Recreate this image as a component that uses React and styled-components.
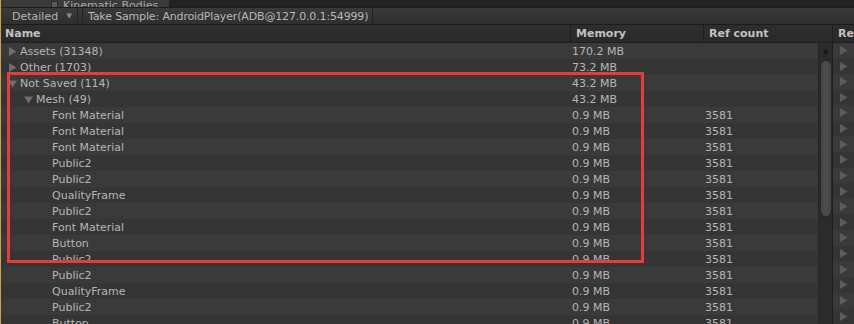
import React from 'react'
import styled, { createGlobalStyle } from 'styled-components'

const GlobalStyle = createGlobalStyle`
  html, body {
    margin: 0;
    padding: 0;
    background: #383838;
    overflow: hidden;
  }
  * { box-sizing: border-box; }
`

const Frame = styled.div`
  width: 854px;
  height: 324px;
  overflow: hidden;
  border-left: 1px solid #c9a44a;
  background: #383838;
  font-family: "DejaVu Sans", sans-serif;
  font-size: 11px;
  color: #b6b6b6;
  display: flex;
  flex-direction: column;
`

const TopStrip = styled.div`
  height: 7px;
  display: flex;
  background: #232323;
  overflow: hidden;
`
const StripLeft = styled.div`
  width: 168px;
  height: 7px;
  background: #3a3a3a;
  display: flex;
  align-items: flex-end;
  padding-left: 50px;
  gap: 5px;
  line-height: 12px;
  color: #a8a8a8;
  white-space: nowrap;
  overflow: hidden;
`
const CheckBox = styled.span`
  flex: none;
  width: 7px;
  height: 6px;
  background: #5a5a5a;
  border: 1px solid #2a2a2a;
  border-bottom: none;
`
const StripText = styled.span`
  margin-bottom: -5px;
`

const Toolbar = styled.div`
  height: 18px;
  display: flex;
  align-items: stretch;
  background: linear-gradient(#3a3a3a, #2f2f2f);
  border-top: 1px solid #1e1e1e;
  border-bottom: 1px solid #1c1c1c;
  white-space: nowrap;
`
const Dropdown = styled.div`
  width: 77px;
  display: flex;
  align-items: center;
  justify-content: space-between;
  padding: 0 5px 0 11px;
  border-right: 1px solid #222;
  color: #b4b4b4;
`
const Caret = styled.span`
  font-size: 7px;
  color: #8a8a8a;
`
const ToolButton = styled.div`
  margin-left: 4px;
  display: flex;
  align-items: center;
  padding: 0 4px 0 5px;
  border-left: 1px solid #222;
  border-right: 1px solid #222;
  color: #b8b8b8;
  letter-spacing: -0.15px;
`

const Body = styled.div`
  flex: 1;
  display: flex;
  min-height: 0;
`
const TreePanel = styled.div`
  width: 835px;
  display: flex;
  flex-direction: column;
  position: relative;
`
const HeaderRow = styled.div`
  height: 18px;
  display: grid;
  grid-template-columns: 570px 133px 1fr;
  background: linear-gradient(#2e2e2e, #292929);
  border-bottom: 1px solid #1f1f1f;
  font-weight: bold;
  color: #c2c2c2;
`
const HeaderCell = styled.div`
  display: flex;
  align-items: center;
  padding-left: ${p => p.$pad}px;
  border-right: ${p => (p.$last ? 'none' : '1px solid #1e1e1e')};
`
const ListArea = styled.div`
  flex: 1;
  display: flex;
  min-height: 0;
`
const Rows = styled.div`
  flex: 1;
  overflow: hidden;
`
const Row = styled.div`
  height: 16px;
  display: grid;
  grid-template-columns: 570px 133px 1fr;
  align-items: center;
  background: ${p => (p.$odd ? '#353535' : '#3a3a3a')};
`
const NameCell = styled.div`
  display: flex;
  align-items: center;
  padding-left: ${p => 7 + p.$level * 16}px;
  white-space: nowrap;
`
const ArrowBox = styled.span`
  width: 12px;
  height: 16px;
  display: flex;
  align-items: center;
  flex: none;
`
const Cell = styled.div`
  padding-left: ${p => p.$pad}px;
  white-space: nowrap;
`

const Scrollbar = styled.div`
  width: 14px;
  background: #2b2b2b;
  border-left: 1px solid #262626;
  display: flex;
  flex-direction: column;
  align-items: center;
  padding-top: 3px;
`
const ScrollArrow = styled.div`
  font-size: 7px;
  color: #151515;
  height: 10px;
  line-height: 10px;
`
const Thumb = styled.div`
  margin-top: 4px;
  width: 12px;
  height: 157px;
  border-radius: 6px;
  background: linear-gradient(90deg, #454545, #4e4e4e 50%, #444);
  border: 1px solid #262626;
`

const Highlight = styled.div`
  position: absolute;
  left: 6px;
  top: 47px;
  width: 637px;
  height: 191px;
  border: 3px solid #e53d3b;
  pointer-events: none;
`

const SidePanel = styled.div`
  flex: 1;
  display: flex;
  flex-direction: column;
  border-left: 1px solid #1e1e1e;
`
const SideHeader = styled.div`
  height: 18px;
  display: flex;
  align-items: center;
  padding-left: 5px;
  font-weight: bold;
  color: #c2c2c2;
  background: linear-gradient(#2e2e2e, #292929);
  border-bottom: 1px solid #1f1f1f;
`
const SideRow = styled.div`
  height: 16px;
  display: flex;
  align-items: center;
  padding-left: 6px;
  background: ${p => (p.$odd ? '#353535' : '#3a3a3a')};
`

const Triangle = ({ open, color = '#6e6e6e' }) => (
  <svg width="9" height="9" viewBox="0 0 9 9">
    {open ? <path d="M0 1.5 L9 1.5 L4.5 8.5 Z" fill={color} /> : <path d="M1 0 L8.5 4.5 L1 9 Z" fill={color} />}
  </svg>
)

const rows = [
  { name: 'Assets (31348)', mem: '170.2 MB', ref: '', level: 0, arrow: 'closed' },
  { name: 'Other (1703)', mem: '73.2 MB', ref: '', level: 0, arrow: 'closed' },
  { name: 'Not Saved (114)', mem: '43.2 MB', ref: '', level: 0, arrow: 'open' },
  { name: 'Mesh (49)', mem: '43.2 MB', ref: '', level: 1, arrow: 'open' },
  { name: 'Font Material', mem: '0.9 MB', ref: '3581', level: 2 },
  { name: 'Font Material', mem: '0.9 MB', ref: '3581', level: 2 },
  { name: 'Font Material', mem: '0.9 MB', ref: '3581', level: 2 },
  { name: 'Public2', mem: '0.9 MB', ref: '3581', level: 2 },
  { name: 'Public2', mem: '0.9 MB', ref: '3581', level: 2 },
  { name: 'QualityFrame', mem: '0.9 MB', ref: '3581', level: 2 },
  { name: 'Public2', mem: '0.9 MB', ref: '3581', level: 2 },
  { name: 'Font Material', mem: '0.9 MB', ref: '3581', level: 2 },
  { name: 'Button', mem: '0.9 MB', ref: '3581', level: 2 },
  { name: 'Public2', mem: '0.9 MB', ref: '3581', level: 2 },
  { name: 'Public2', mem: '0.9 MB', ref: '3581', level: 2 },
  { name: 'QualityFrame', mem: '0.9 MB', ref: '3581', level: 2 },
  { name: 'Public2', mem: '0.9 MB', ref: '3581', level: 2 },
  { name: 'Button', mem: '0.9 MB', ref: '3581', level: 2 },
]

export default function App() {
  return (
    <Frame>
      <GlobalStyle />
      <TopStrip>
        <StripLeft>
          <CheckBox />
          <StripText>Kinematic Bodies</StripText>
        </StripLeft>
      </TopStrip>
      <Toolbar>
        <Dropdown>
          Detailed
          <Caret>▼</Caret>
        </Dropdown>
        <ToolButton>Take Sample: AndroidPlayer(ADB@127.0.0.1:54999)</ToolButton>
      </Toolbar>
      <Body>
        <TreePanel>
          <HeaderRow>
            <HeaderCell $pad={4}>Name</HeaderCell>
            <HeaderCell $pad={5}>Memory</HeaderCell>
            <HeaderCell $pad={5} $last>Ref count</HeaderCell>
          </HeaderRow>
          <ListArea>
            <Rows>
              {rows.map((r, i) => (
                <Row key={i} $odd={i % 2 === 1}>
                  <NameCell $level={r.level}>
                    <ArrowBox>{r.arrow && <Triangle open={r.arrow === 'open'} />}</ArrowBox>
                    {r.name}
                  </NameCell>
                  <Cell $pad={1}>{r.mem}</Cell>
                  <Cell $pad={1}>{r.ref}</Cell>
                </Row>
              ))}
            </Rows>
            <Scrollbar>
              <ScrollArrow>▲</ScrollArrow>
              <Thumb />
            </Scrollbar>
          </ListArea>
          <Highlight />
        </TreePanel>
        <SidePanel>
          <SideHeader>Re</SideHeader>
          {rows.map((r, i) => (
            <SideRow key={i} $odd={i % 2 === 1}>
              <Triangle color="#5c5c5c" />
            </SideRow>
          ))}
        </SidePanel>
      </Body>
    </Frame>
  )
}
